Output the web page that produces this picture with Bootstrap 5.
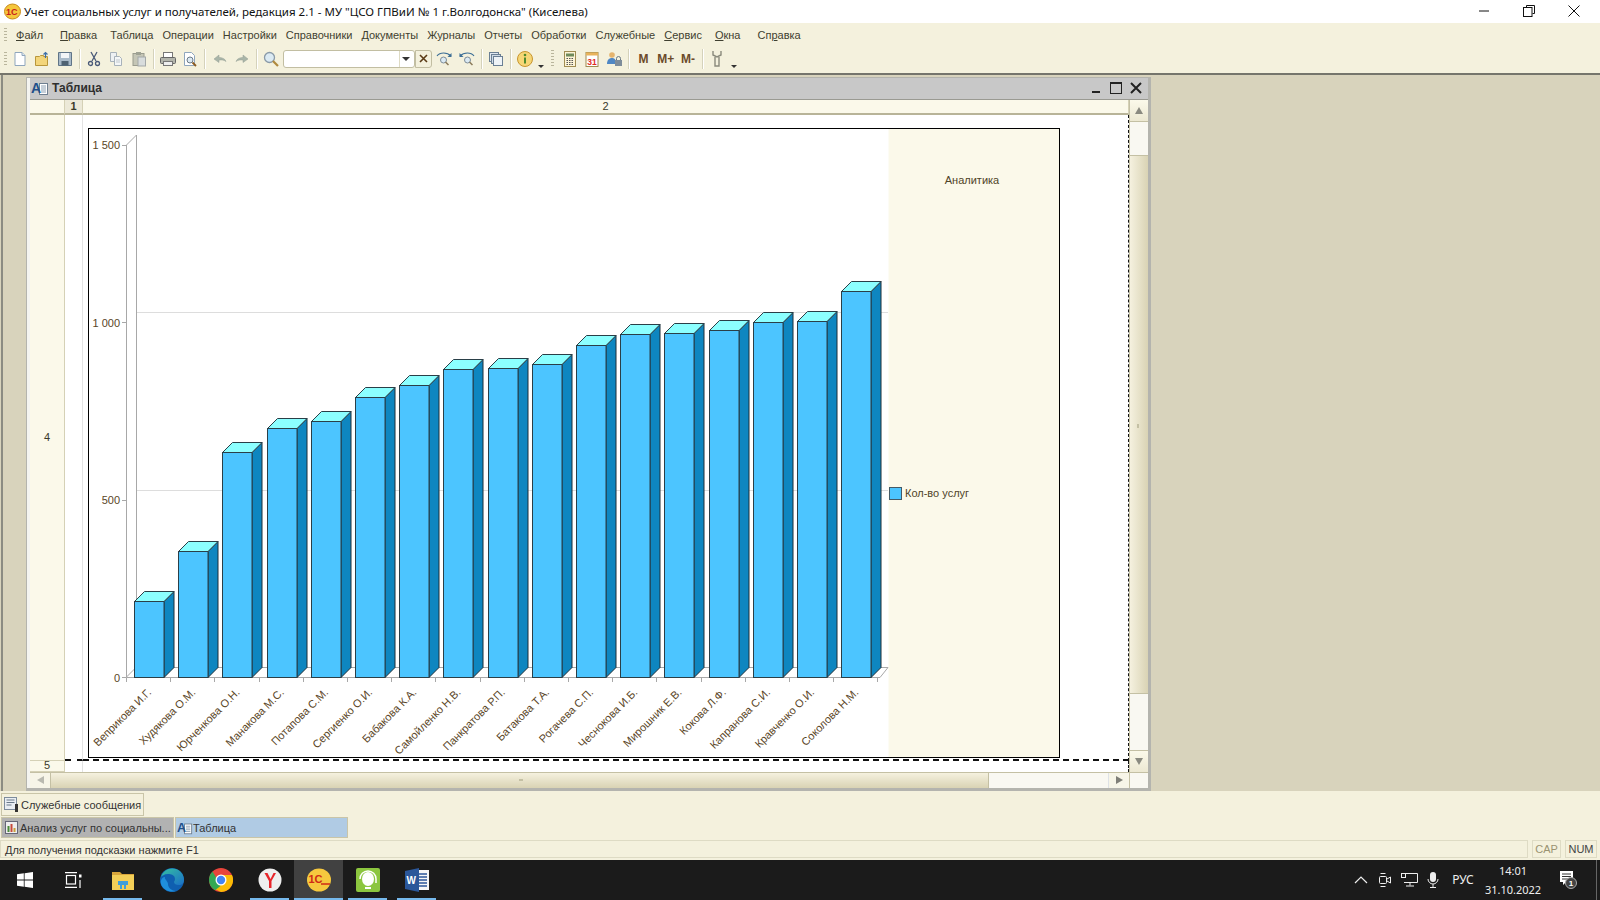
<!DOCTYPE html>
<html lang="ru"><head><meta charset="utf-8"><title>1C</title>
<link href="https://cdn.jsdelivr.net/npm/bootstrap@5.3.0/dist/css/bootstrap.min.css" rel="stylesheet">
<style>
html,body{height:900px;overflow:hidden}
body{font-family:"Liberation Sans",Arial,sans-serif;font-size:11px;color:#3b3b2c;background:#f4f1dd;line-height:1}
svg{display:block;flex:none}
.titlebar{height:23px;background:#fff;color:#111}
.titlebar .t{font-family:"Noto Sans",sans-serif;font-size:11.5px;margin-left:3px}
.winbtn{width:45px}
.menubar{height:24px;padding:2px 0 0 16px;gap:9px;position:relative}
.menubar .nav-link{padding:0;color:#3f3f30;font-size:11px}
.grip{position:absolute;left:4px;top:5px;width:3px;height:15px;background:repeating-linear-gradient(#b9b59c 0 1px,transparent 1px 3px)}
.toolbar{height:26px;padding:0 0 2px 9px;position:relative}
.tb{width:22.3px;height:22px;display:flex;align-items:center;justify-content:center;font-weight:700;font-size:12px;color:#6b4a2a;flex:none}
.tb-d{width:12px;height:22px;position:relative;flex:none}
.tb-d::after{content:"";position:absolute;left:2px;bottom:2px;border:3px solid transparent;border-top-color:#333;border-bottom:0}
.sep{width:1px;height:20px;background:#d5d2bb;margin:0 3px;flex:none;box-shadow:1px 0 #fff}
.grip2{width:3px;height:18px;margin:0 4px 0 3px;flex:none;background:repeating-linear-gradient(#b9b59c 0 1px,transparent 1px 3px)}
.search{width:132px;height:18px;background:#fff;border:1px solid #c2bea2;border-radius:3px;margin-left:1px;position:relative;flex:none}
.search::after{content:"";position:absolute;right:4px;top:6px;border:4px solid transparent;border-top-color:#333;border-bottom:0}
.search::before{content:"";position:absolute;right:14px;top:0;bottom:0;border-left:1px solid #dedbc4}
.xbtn{width:17px;height:18px;border:1px solid #c2bea2;border-radius:0 3px 3px 0;color:#5b3b16;display:flex;align-items:center;justify-content:center;flex:none;margin-right:1px}
.mdi{background:#d8d3bc;border-top:2px solid #75756c;height:719px;padding:2px 0 0 26px;position:relative}
.mdi::before{content:"";position:absolute;left:1px;top:0;bottom:0;width:2px;background:#8b8b82}
.wnd{width:1125px;height:714px;background:#f4f4f0;border:solid #b4b4ae;border-width:1px 3px 3px 1px}
.wnd-title{height:22px;background:#c8c8c8;margin-left:3px;padding-left:1px;color:#2f2f2f;border-bottom:1px solid #9a9a92}
.wnd-title b{font-size:12px;margin-left:3px}
.wnd-btns{margin-right:2px}
.wnd-body{margin-left:3px;height:688px;background:#fff;display:grid;grid-template-columns:35px 18px 1046px 1fr;grid-template-rows:15px 646px 11px 16px}
.hd{background:#fbf9ea;border-bottom:2px solid #b8b498;border-right:1px solid #d5d1b6;display:flex;align-items:center;justify-content:center;color:#3a3a2a;font-size:11px;padding-top:1px}
.hd.sel{background:#ece9d8;font-weight:700}
.rh{background:#fbf9ea;border-right:1px solid #d5d1b6;display:flex;align-items:center;justify-content:center;font-size:11px;color:#3a3a2a;border-bottom:1px solid #d5d1b6}
.cell1{border-right:1px solid #e3e3e3;border-bottom:2px dashed #111}
.cell2{border-right:1.5px dashed #111;border-bottom:2px dashed #111;padding:13px 0 0 5px}
.cell5{border-right:1.5px dashed #111}
.frame{width:972px;height:630px;border:1px solid #000;background:#fbf9ea}
.vs{grid-column:4;grid-row:1/4;background:#f9f8f2;border-left:1px solid #c4c0a4;display:flex;flex-direction:column}
.arr{height:22px;flex:none;background:linear-gradient(#fbf9ea,#ece8d2);border-bottom:1px solid #c4c0a4;display:flex;align-items:center;justify-content:center;color:#8a8a80}
.vth{margin-top:33px;height:539px;background:linear-gradient(90deg,#f5f1df,#d9d3b4);border-top:1px solid #c4c0a4;border-bottom:1px solid #c4c0a4;position:relative}
.vth::after{content:"";position:absolute;left:7px;top:268px;width:2px;height:4px;background:#c4c0a4}
.arr.dn{margin-top:auto;border-top:1px solid #c4c0a4;border-bottom:0}
.hs{grid-column:1/4;grid-row:4;background:#f9f8f2;border-top:1px solid #c4c0a4;display:flex}
.harr{width:21px;background:#f7f5e8;border-right:1px solid #c4c0a4;display:flex;align-items:center;justify-content:center;flex:none}
.hth{width:938px;background:linear-gradient(#f5f1df,#d9d3b4);border-right:1px solid #c4c0a4;position:relative}
.hth::after{content:"";position:absolute;left:468px;top:6px;width:4px;height:2px;background:#c4c0a4}
.corner{grid-column:4;grid-row:4;background:#f9f8f2;border-top:1px solid #c4c0a4;border-left:1px solid #c4c0a4}
.svc{height:25px;padding:2px 1px 0}
.svc .box{width:143px;height:23px;border:1px solid #c9c5a8;padding-left:2px;gap:1px;color:#333;background:#f4f1dd;white-space:nowrap}
.svc span,.tab span,.st-main span{padding-top:2px}
.tabs{height:22px;padding:1px 1px 0;gap:1px}
.tab{width:173px;height:21px;border:1px solid #c9c5a8;padding-left:2px;gap:1px;color:#333;white-space:nowrap;overflow:hidden}
.tab.a{background:#b2b2b2}
.tab.b{background:#b0cbe4;padding-left:1px;gap:0}
.status{height:22px;padding:2px 2px 2px 0;gap:4px}
.status>div{height:18px;border:1px solid #dedbc4;display:flex;align-items:center;flex:none}
.st-main{width:1528px;padding-left:4px;color:#333}
.st-cap{width:29px;justify-content:center;color:#9a9372}
.st-num{width:32px;justify-content:center;color:#444}
.taskbar{height:40px;background:#1b1b1b;color:#fff}
.tk{width:49px;height:40px;display:flex;align-items:center;justify-content:center;position:relative;flex:none}
.tk.on::after{content:"";position:absolute;left:5px;right:5px;bottom:0;height:2px;background:#76b9ed}
.tk.act{background:#414141}
.tk.act::after{left:0;right:0}
.tray{font-family:"Noto Sans",sans-serif;font-size:12px;color:#eee}
.tray>div{display:flex;align-items:center;justify-content:center;height:40px;flex:none}
.clock{line-height:19px;text-align:center;flex-direction:column;font-size:11px}
.endline{width:1px;background:#666;margin:0 3px 0 4px}
text{font-family:"Liberation Sans",Arial,sans-serif}
</style></head>
<body class="d-flex flex-column">

<div class="titlebar d-flex align-items-center ps-1">
<svg width="17" height="17" viewBox="0 0 17 17"><ellipse cx="8.5" cy="8.5" rx="8" ry="7.5" fill="#f5c63b" stroke="#c98a1a"/><text x="2" y="11.500" font-size="9" font-weight="700" fill="#c9201a">1С</text></svg>
<span class="t">Учет социальных услуг и получателей, редакция 2.1 - МУ "ЦСО ГПВиИ № 1 г.Волгодонска" (Киселева)</span>
<div class="ms-auto d-flex me-1">
<div class="winbtn d-flex justify-content-center"><svg width="12" height="12" viewBox="0 0 12 12"><path d="M1 6h10" stroke="#111"/></svg></div>
<div class="winbtn d-flex justify-content-center"><svg width="12" height="12" viewBox="0 0 12 12" fill="none" stroke="#111"><path d="M3.500 2.500V.5h8v8h-2"/><rect x=".5" y="2.500" width="8.500" height="9"/></svg></div>
<div class="winbtn d-flex justify-content-center"><svg width="12" height="12" viewBox="0 0 12 12"><path d="M.5.500l11 11m0-11l-11 11" stroke="#111"/></svg></div>
</div>
</div>

<nav class="nav menubar align-items-center flex-nowrap">
<span class="grip"></span>
<a class="nav-link me-2"><u>Ф</u>айл</a><a class="nav-link me-1"><u>П</u>равка</a><a class="nav-link">Таблица</a><a class="nav-link">Операции</a><a class="nav-link">Настройки</a><a class="nav-link">Справочники</a><a class="nav-link">Документы</a><a class="nav-link">Журналы</a><a class="nav-link">Отчеты</a><a class="nav-link">Обработки</a><a class="nav-link">Служебные</a><a class="nav-link"><u>С</u>ервис</a><a class="nav-link ms-1"><u>О</u>кна</a><a class="nav-link ms-2">Сп<u>р</u>авка</a>
</nav>

<div class="toolbar d-flex align-items-center">
<span class="grip"></span>
<div class="tb"><svg width="16" height="16" viewBox="0 0 16 16"><path d="M3 1.500h7l3 3v10H3z" fill="#fff" stroke="#8fa6bd"/><path d="M10 1.500v3h3" fill="#dde7f0" stroke="#8fa6bd"/></svg></div>
<div class="tb"><svg width="16" height="16" viewBox="0 0 16 16"><path d="M1.500 14.500v-9h4l1-1h3v1h4v9z" fill="#f3d57a" stroke="#b8963a"/><path d="M11.500 7V1.500M9.500 3.500l2-2 2 2" fill="none" stroke="#3d6fa8" stroke-width="1.200"/></svg></div>
<div class="tb"><svg width="16" height="16" viewBox="0 0 16 16"><path d="M1.500 1.500h13v13h-13z" fill="#a9bac9" stroke="#5f7487"/><rect x="4" y="2" width="8" height="5" fill="#f3f5f7"/><rect x="4.500" y="10" width="7" height="4.500" fill="#4f6272"/></svg></div>
<div class="sep"></div>
<div class="tb"><svg width="16" height="16" viewBox="0 0 16 16" fill="none" stroke="#4a5a78" stroke-width="1.300"><path d="M5 1l5 9M11 1l-5 9"/><circle cx="4.500" cy="12.500" r="2"/><circle cx="11.500" cy="12.500" r="2"/></svg></div>
<div class="tb"><svg width="16" height="16" viewBox="0 0 16 16"><path d="M2.500 1.500h6v9h-6z" fill="#eef1f3" stroke="#a8b2ba"/><path d="M6.500 5.500h5l2 2v7h-7z" fill="#f4f6f7" stroke="#a8b2ba"/><path d="M8 9h4M8 11h4" stroke="#c0c8ce"/></svg></div>
<div class="tb"><svg width="16" height="16" viewBox="0 0 16 16"><rect x="2" y="2.500" width="11" height="12" fill="#c5c6b6" stroke="#9a9c8e"/><rect x="5" y="1" width="5" height="3" fill="#9fa294"/><rect x="7" y="6" width="7.500" height="9" fill="#d8dcdc" stroke="#a3a8a8"/></svg></div>
<div class="sep"></div>
<div class="tb"><svg width="18" height="16" viewBox="0 0 18 16"><rect x="4.500" y="1.500" width="9" height="5" fill="#fff" stroke="#777"/><rect x="1.500" y="6.500" width="15" height="6" rx="1" fill="#b3b5ac" stroke="#666"/><rect x="4.500" y="10.500" width="9" height="4" fill="#eee" stroke="#777"/></svg></div>
<div class="tb"><svg width="16" height="16" viewBox="0 0 16 16"><path d="M2.500 1.500h7l3 3v10h-10z" fill="#fff" stroke="#8fa6bd"/><circle cx="8" cy="9" r="3" fill="#dce9f2" stroke="#6b7b88"/><path d="M10.500 11.500l3.500 3.500" stroke="#8a5a20" stroke-width="1.800"/></svg></div>
<div class="sep"></div>
<div class="tb"><svg width="16" height="14" viewBox="0 0 16 14"><path d="M2 7l5-4v2.500c3 0 6 1 7 4-2-1.500-4-1.700-7-1.500V10.500z" fill="#a9b5a8" stroke="#959e95" stroke-width=".5"/></svg></div>
<div class="tb"><svg width="16" height="14" viewBox="0 0 16 14"><path d="M14 7L9 3v2.500c-3 0-6 1-7 4 2-1.500 4-1.700 7-1.500v2.500z" fill="#a9b5a8" stroke="#959e95" stroke-width=".5"/></svg></div>
<div class="sep"></div>
<div class="tb"><svg width="18" height="18" viewBox="0 0 18 18"><circle cx="7.500" cy="7.500" r="5" fill="#dbeaf3" stroke="#8a9aa8" stroke-width="1.300"/><path d="M11 11l5 5" stroke="#b08a3e" stroke-width="2.200"/></svg></div>
<div class="search"></div>
<div class="xbtn"><svg width="9" height="9" viewBox="0 0 9 9"><path d="M1 1l7 7m0-7L1 8" stroke="#5b3b16" stroke-width="1.600"/></svg></div>
<div class="tb"><svg width="18" height="16" viewBox="0 0 18 16"><path d="M2 5c3-4 10-4 14 0" fill="none" stroke="#3d6f96" stroke-width="1.200"/><path d="M16.500 2v4h-4z" fill="#3d6f96"/><circle cx="8.500" cy="9" r="3" fill="#dbeaf3" stroke="#7d8c98"/><path d="M10.500 11l3 3" stroke="#8b7b5a" stroke-width="1.500"/></svg></div>
<div class="tb"><svg width="18" height="16" viewBox="0 0 18 16"><path d="M16 5C13 1 6 1 2 5" fill="none" stroke="#3d6f96" stroke-width="1.200"/><path d="M1.500 2v4h4z" fill="#3d6f96"/><circle cx="9.500" cy="9" r="3" fill="#dbeaf3" stroke="#7d8c98"/><path d="M11.500 11l3 3" stroke="#8b7b5a" stroke-width="1.500"/></svg></div>
<div class="sep"></div>
<div class="tb"><svg width="16" height="16" viewBox="0 0 16 16"><rect x="1.500" y="1.500" width="9" height="9" fill="#dfe8f0" stroke="#6a7f94"/><rect x="3.500" y="3.500" width="9" height="9" fill="#cfdbe6" stroke="#6a7f94"/><rect x="5.500" y="5.500" width="9" height="9" fill="#eef3f7" stroke="#6a7f94"/></svg></div>
<div class="sep"></div>
<div class="tb"><svg width="18" height="18" viewBox="0 0 18 18"><circle cx="9" cy="9" r="7.500" fill="#f6d675" stroke="#c8952e"/><circle cx="9" cy="5" r="1.300" fill="#4f8a2c"/><rect x="8" y="7.500" width="2" height="6" fill="#4f8a2c"/></svg></div>
<div class="tb-d"></div>
<div class="grip2"></div>
<div class="tb"><svg width="14" height="16" viewBox="0 0 14 16"><rect x="1.500" y=".5" width="11" height="15" fill="#fdf4d6" stroke="#a08c52"/><rect x="3" y="2.500" width="8" height="3" fill="#6f8a5a"/><path d="M3.500 7.500h7M3.500 9.500h7M3.500 11.500h7M3.500 13.500h7" stroke="#555" stroke-dasharray="1.500 1"/></svg></div>
<div class="tb"><svg width="14" height="16" viewBox="0 0 14 16"><rect x="1" y="1.500" width="12" height="14" fill="#fff" stroke="#a08c52"/><rect x="1" y="1.500" width="12" height="3" fill="#e8b35c"/><text x="7" y="13.500" font-size="8.500" fill="#e02a1c" text-anchor="middle">31</text></svg></div>
<div class="tb"><svg width="17" height="16" viewBox="0 0 17 16"><circle cx="6" cy="4" r="2.800" fill="#e5b46e"/><path d="M1 13c0-4 2-6 5-6s4 2 4 6z" fill="#4f87c4"/><rect x="9" y="9" width="7" height="6" fill="#7d8c9a"/><path d="M10.500 9V7.500a2 2 0 0 1 4 0V9" fill="none" stroke="#6a7884"/></svg></div>
<div class="sep"></div>
<div class="tb">M</div><div class="tb">M+</div><div class="tb">M-</div>
<div class="sep"></div>
<div class="tb"><svg width="14" height="18" viewBox="0 0 14 18" fill="none" stroke="#8a8a7c" stroke-width="1.400"><path d="M3 1v4l4 2 4-2V1M5 7v9h4V7"/></svg></div>
<div class="tb-d"></div>
</div>

<div class="mdi">
<div class="wnd d-flex flex-column">
<div class="wnd-title d-flex align-items-center">
<svg width="18" height="16" viewBox="0 0 18 16"><rect x="8.500" y="3.500" width="8" height="11" fill="#fff" stroke="#6f7f90"/><path d="M10 6h5M10 8h5M10 10h5M10 12h5" stroke="#8ea0b2"/><text x="0" y="13" font-size="14" font-weight="700" fill="#214f8a">A</text></svg>
<b>Таблица</b>
<div class="ms-auto d-flex align-items-center wnd-btns">
<svg width="20" height="16" viewBox="0 0 20 16"><rect x="6" y="11" width="8" height="2" fill="#222"/></svg>
<svg width="20" height="16" viewBox="0 0 20 16" fill="none" stroke="#222"><rect x="4.500" y="2.500" width="11" height="11"/><path d="M4.500 3.500h11"/></svg>
<svg width="20" height="16" viewBox="0 0 20 16"><path d="M5 3l10 10m0-10L5 13" stroke="#222" stroke-width="2"/></svg>
</div>
</div>
<div class="wnd-body">
<div class="hd"></div><div class="hd sel">1</div><div class="hd">2</div>
<div class="vs">
<div class="arr"><svg width="10" height="9" viewBox="0 0 10 9"><path d="M5 1l4 7H1z" fill="#8a8a80"/></svg></div>
<div class="vth"></div>
<div class="arr dn"><svg width="10" height="9" viewBox="0 0 10 9"><path d="M5 8L9 1H1z" fill="#8a8a80"/></svg></div>
</div>
<div class="rh">4</div><div class="cell1"></div>
<div class="cell2"><div class="frame"><svg id="chart" width="970" height="628" viewBox="89 129 970 628"></svg></div></div>
<div class="rh">5</div><div class="cell1 border-bottom-0"></div><div class="cell5"></div>
<div class="hs">
<div class="harr"><svg width="9" height="10" viewBox="0 0 9 10"><path d="M1 5l7-4v8z" fill="#b9b9b0"/></svg></div>
<div class="hth"></div>
<div class="flex-grow-1"></div>
<div class="harr border-end-0 border-start"><svg width="9" height="10" viewBox="0 0 9 10"><path d="M8 5L1 1v8z" fill="#7f7f78"/></svg></div>
</div>
<div class="corner"></div>
</div>
</div>
</div>

<div class="svc d-flex"><div class="box d-flex align-items-center">
<svg width="16" height="16" viewBox="0 0 16 16"><rect x=".5" y=".5" width="12" height="12" fill="#e9eef3" stroke="#7d8c9c"/><path d="M2.500 3h8M2.500 5.500h8M2.500 8h5" stroke="#6a7a8a"/><rect x="11" y="7" width="3" height="8" fill="#333"/></svg>
<span>Служебные сообщения</span></div></div>

<div class="tabs d-flex">
<div class="tab a d-flex align-items-center"><svg width="15" height="15" viewBox="0 0 15 15"><rect x="1.500" y="1.500" width="12" height="12" fill="#eee" stroke="#667"/><rect x="3.500" y="6" width="2" height="6" fill="#4a8a3a"/><rect x="6.500" y="4" width="2" height="8" fill="#c84a3a"/><rect x="9.500" y="8" width="2" height="4" fill="#c8a03a"/></svg><span>Анализ услуг по социальны...</span></div>
<div class="tab b d-flex align-items-center"><svg width="16" height="16" viewBox="0 0 18 16"><rect x="8.500" y="3.500" width="8" height="11" fill="#fff" stroke="#6f7f90"/><path d="M10 6h5M10 8h5M10 10h5M10 12h5" stroke="#8ea0b2"/><text x="0" y="13" font-size="14" font-weight="700" fill="#214f8a">A</text></svg><span>Таблица</span></div>
</div>

<div class="status d-flex">
<div class="st-main"><span>Для получения подсказки нажмите F1</span></div>
<div class="st-cap">CAP</div>
<div class="st-num">NUM</div>
</div>

<div class="taskbar d-flex">
<div class="tk"><svg width="16" height="16" viewBox="0 0 16 16" fill="#fff"><path d="M0 2.300l6.800-1v6.300H0zM7.600 1.200L16 0v7.600H7.600zM0 8.400h6.800v6.300l-6.800-1zM7.600 8.400H16V16l-8.400-1.200z"/></svg></div>
<div class="tk"><svg width="17" height="16" viewBox="0 0 17 16" fill="none" stroke="#fff" stroke-width="1.200"><path d="M0 .6h12M0 15.400h12"/><rect x="1.500" y="3.500" width="9" height="8.500"/><rect x="14" y="2.500" width="2.500" height="3" fill="#fff" stroke="none"/><path d="M15 8v8"/></svg></div>
<div class="tk on"><svg width="22" height="20" viewBox="0 0 22 20"><path d="M0 2h8l2 2h12v4H0z" fill="#d9a63b"/><path d="M0 5h22v15H0z" fill="#f4cf58"/><path d="M6 11h10v2h-2v6h-2v-4h-2v4H8v-6H6z" fill="#3f9edb"/><rect x="6" y="11" width="10" height="4" fill="#3f9edb"/></svg></div>
<div class="tk"><svg width="24" height="24" viewBox="0 0 24 24"><defs><linearGradient id="eg" x1="0" y1="0" x2="1" y2="1"><stop offset="0" stop-color="#35c1a0"/><stop offset="1" stop-color="#1b6fc8"/></linearGradient></defs><circle cx="12" cy="12" r="12" fill="#0f5fb0"/><path d="M1 9C3 2 10-1 16 1c5 2 8 6 8 11 0 3-2 5-5 5-3 0-5-1-5-3 0-1 1-1 1-3C15 7 11 6 8 6 4 6 2 8 1 9z" fill="url(#eg)"/><path d="M8 16c0 4 4 7 8 7-6 2-13-1-15-7-1-3 1-7 4-7-1 2 3 4 3 7z" fill="#1f8fdc"/></svg></div>
<div class="tk"><svg width="24" height="24" viewBox="0 0 24 24"><circle cx="12" cy="12" r="12" fill="#e8453c"/><path d="M12 24A12 12 0 0 0 23 7H12l-.5 5L6 21z" fill="#fbbc05"/><path d="M1.600 18A12 12 0 0 1 3.500 3.500L8 11l3.500 7-5.500 4.300A12 12 0 0 1 1.600 18z" fill="#34a853"/><circle cx="12" cy="12" r="5.500" fill="#fff"/><circle cx="12" cy="12" r="4.200" fill="#4285f4"/></svg></div>
<div class="tk on"><svg width="24" height="24" viewBox="0 0 24 24"><circle cx="12" cy="12" r="11.500" fill="#eeeeee"/><path d="M6.500 5l4.500 8v7h2.500v-7L18 5h-2.500l-3 6-3-6z" fill="#e8242a"/></svg></div>
<div class="tk on act"><svg width="24" height="24" viewBox="0 0 24 24"><ellipse cx="12" cy="12" rx="12" ry="11.500" fill="#f6c83e"/><text x="1.500" y="15" font-size="11" font-weight="700" fill="#cf2a16">1С</text><path d="M14 16h9" stroke="#cf2a16" stroke-width="1.500"/></svg></div>
<div class="tk on"><svg width="24" height="24" viewBox="0 0 24 24"><rect width="24" height="24" rx="2" fill="#8cc63f"/><ellipse cx="12" cy="11" rx="6" ry="7" fill="#fff"/><path d="M4 11a8 8 0 0 1 16 0v4" fill="none" stroke="#fff" stroke-width="1.500"/><path d="M9 20h6" stroke="#fff" stroke-width="2"/></svg></div>
<div class="tk on"><svg width="24" height="24" viewBox="0 0 24 24"><rect x="9" y="2" width="15" height="20" fill="#f4f6f8"/><path d="M14 6h8M14 9h8M14 12h8M14 15h8M14 18h8" stroke="#2b579a" stroke-width="1.300"/><path d="M0 3l14-3v24L0 21z" fill="#2b579a"/><text x="1.500" y="16" font-size="10" font-weight="700" fill="#fff">W</text></svg></div>
<div class="ms-auto d-flex tray">
<div style="width:24px"><svg width="14" height="8" viewBox="0 0 14 8"><path d="M1 7l6-6 6 6" fill="none" stroke="#eee" stroke-width="1.200"/></svg></div>
<div style="width:24px"><svg width="12" height="16" viewBox="0 0 12 16" fill="none" stroke="#eee"><rect x=".5" y="4.500" width="7" height="7" rx="1"/><path d="M8 7l3.500-2v6L8 9M1.500 1.500h5M1.500 14.500h5"/></svg></div>
<div style="width:24px"><svg width="17" height="14" viewBox="0 0 17 14" fill="none" stroke="#eee"><path d="M3 .5h13.500v9H3M9 9.500v3M5 13h8"/><rect x=".5" y=".5" width="4" height="4"/></svg></div>
<div style="width:23px"><svg width="12" height="16" viewBox="0 0 12 16"><rect x="3" y="0" width="6" height="10" rx="3" fill="#eee"/><path d="M1 7a5 5 0 0 0 10 0M6 12v3M3 15.500h6" fill="none" stroke="#eee"/></svg></div>
<div style="width:38px">РУС</div>
<div class="clock" style="width:62px"><span>14:01</span><span>31.10.2022</span></div>
<div style="width:48px"><svg width="20" height="18" viewBox="0 0 20 18"><path d="M2 0h13v11H8l-3 3v-3H2z" fill="#fff"/><path d="M4 3h9M4 5.500h9M4 8h6" stroke="#333"/><circle cx="13" cy="12" r="5.500" fill="#444" stroke="#aaa"/><text x="13" y="15" font-size="8" fill="#fff" text-anchor="middle" font-weight="700">1</text></svg></div>
<div class="endline"></div>
</div>
</div>

<script>
(function(){
var tops=[601,551,452,428,421,397,385,369,368,364,345,334,333,330,322,321,291];
var names=["Веприкова И.Г.","Худякова О.М.","Юрченкова О.Н.","Манакова М.С.","Потапова С.М.","Сергиенко О.И.","Бабакова К.А.","Самойленко Н.В.","Панкратова Р.П.","Батакова Т.А.","Рогачева С.П.","Чеснокова И.Б.","Мирошник Е.В.","Кокова Л.Ф.","Капранова С.И.","Кравченко О.И.","Соколова Н.М."];
var s='<rect x="89" y="129" width="799.5" height="628" fill="#fff"/>';
var g='#a8a8a8';
function l(a,b,c,d,col){return '<path d="M'+a+' '+b+'L'+c+' '+d+'" stroke="'+(col||g)+'" fill="none"/>';}
s+=l(136.5,312.5,888,312.5,'#ddd')+l(136.5,490.5,888,490.5,'#ddd');
s+=l(126.5,145,126.5,677)+l(136.5,135,136.5,667)+l(126.5,145,136.5,135)+l(126.5,677,136.5,667);
s+=l(126.5,677.5,880,677.5)+l(136.5,667.5,888,667.5)+l(880,677.5,888,667.5);
[[145,'1 500'],[322.5,'1 000'],[500,'500'],[677.5,'0']].forEach(function(t){
 s+=l(122,Math.floor(t[0])+.5,126.5,Math.floor(t[0])+.5);
 s+='<text x="120" y="'+(t[0]+4)+'" text-anchor="end" font-size="11" fill="#5a4526">'+t[1]+'</text>';
});
for(var i=0;i<=17;i++){var tx=Math.round(126+44.2*i)+.5;s+=l(tx,677.5,tx,682);}
tops.forEach(function(t,i){
 var x=Math.round(134+44.2*i)+.5,w=29.5,d=10,b=677.5;t+=.5;
 s+='<path d="M'+(x+w)+' '+t+'l'+d+' -'+d+'V'+(b-d)+'L'+(x+w)+' '+b+'z" fill="#0e86c0" stroke="#1d2f38"/>';
 s+='<path d="M'+x+' '+t+'l'+d+' -'+d+'h'+w+'l-'+d+' '+d+'z" fill="#8cffff" stroke="#2a3f48"/>';
 s+='<rect x="'+x+'" y="'+t+'" width="'+w+'" height="'+(b-t)+'" fill="#4cc5ff" stroke="#2a3f48"/>';
 var ex=152+44.2*i,ey=693;
 s+='<text x="'+ex+'" y="'+ey+'" text-anchor="end" font-size="11" fill="#5a4526" transform="rotate(-45 '+ex+' '+ey+')">'+names[i]+'</text>';
});
s+='<text x="972" y="184" text-anchor="middle" font-size="11" fill="#4f4428">Аналитика</text>';
s+='<rect x="889.500" y="487.500" width="12" height="12" fill="#4cc5ff" stroke="#445a66"/>';
s+='<text x="905" y="497" font-size="11" fill="#4f4428">Кол-во услуг</text>';
document.getElementById('chart').innerHTML=s;
})();
</script>
<script src="https://cdn.jsdelivr.net/npm/bootstrap@5.3.0/dist/js/bootstrap.bundle.min.js"></script>
</body></html>
